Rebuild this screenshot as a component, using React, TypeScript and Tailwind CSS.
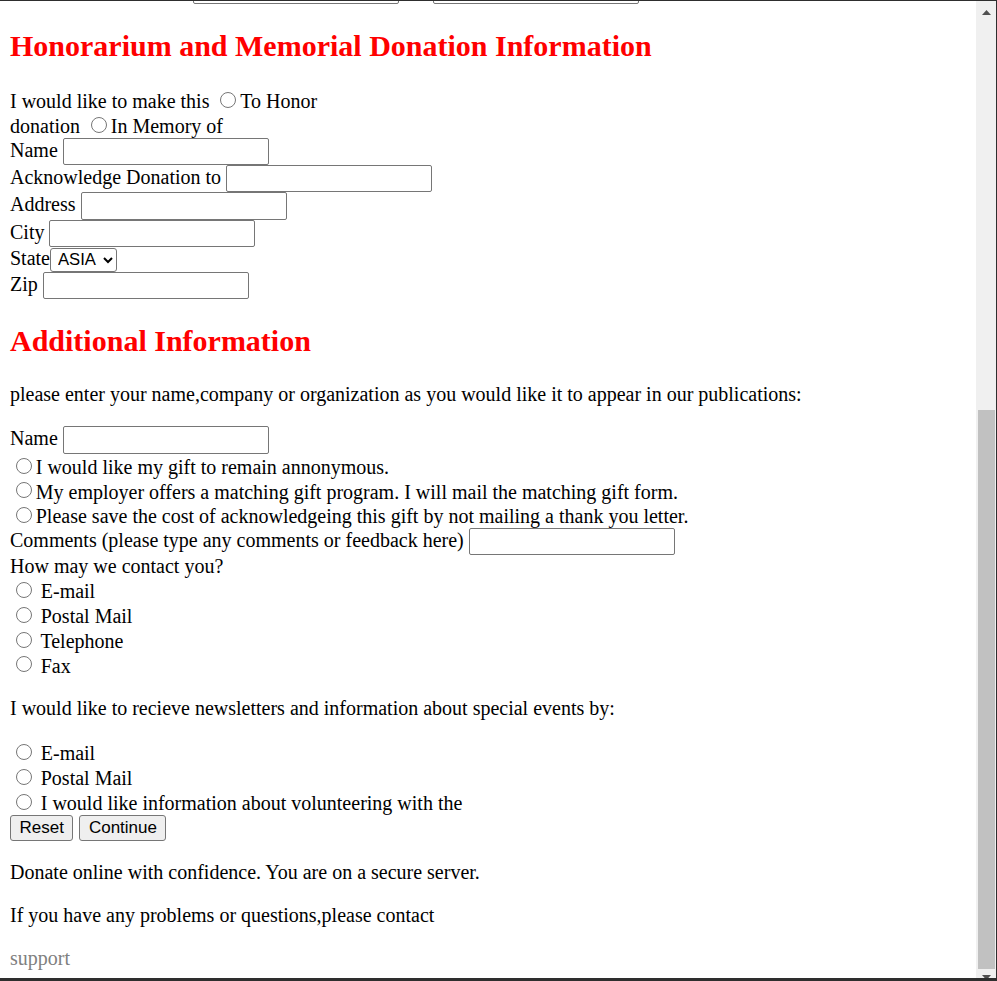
import React from "react";

const inputCls =
  "inline-block w-[206px] h-[27.4px] border border-[#767676] rounded-[2px] bg-white px-[2.5px] font-['Liberation_Sans',Arial,sans-serif] text-[16.67px] leading-[normal] align-baseline";

function Radio({ name }: { name: string }) {
  return (
    <input
      type="radio"
      name={name}
      className="inline-block w-[16px] h-[16px] mt-[3.75px] mr-[3.75px] ml-[6px] align-baseline"
    />
  );
}

function TextInput() {
  return <input type="text" className={inputCls} />;
}

function Btn({ children, cls = "" }: { children: React.ReactNode; cls?: string }) {
  return (
    <button
      type="button"
      className={
        "inline-block h-[26.5px] px-[8.5px] bg-[#efefef] border border-[#767676] rounded-[3px] font-['Liberation_Sans',Arial,sans-serif] text-[17px] leading-[normal] align-baseline text-black " +
        cls
      }
    >
      {children}
    </button>
  );
}

export default function App() {
  return (
    <div className="w-[997px] h-[981px] flex border-t border-r border-b-[3px] border-[#2e2e2e] bg-white">
      <div className="flex-1 h-[977px] overflow-hidden pl-[10px] font-['Liberation_Serif','Times_New_Roman',serif] text-[20px] leading-[23px] text-black">
        <div className="h-[3px] overflow-hidden flex items-end">
          <input type="text" className={inputCls + " shrink-0 ml-[183px]"} />
          <input type="text" className={inputCls + " shrink-0 ml-[34px]"} />
        </div>

        <h2 className="mt-[24.5px] mb-[25px] text-[30px] leading-[34.5px] font-bold text-[#ff0000]">
          Honorarium and Memorial Donation Information
        </h2>

        <div>
          I would like to make this <Radio name="honor" />
          To Honor
          <br />
          donation <Radio name="honor" />
          In Memory of
        </div>
        <div>
          Name <TextInput />
        </div>
        <div>
          Acknowledge Donation to <TextInput />
        </div>
        <div>
          Address <TextInput />
        </div>
        <div>
          City <TextInput />
        </div>
        <div>
          State
          <select
            defaultValue="ASIA"
            className="inline-block w-[67px] h-[24px] border border-[#767676] rounded-[3px] bg-white pl-[3px] font-['Liberation_Sans',Arial,sans-serif] text-[16.67px] leading-[normal] align-baseline text-black"
          >
            <option value="ASIA">ASIA</option>
          </select>
        </div>
        <div>
          Zip <TextInput />
        </div>

        <h2 className="mt-[25px] mb-[25px] text-[30px] leading-[34.5px] font-bold text-[#ff0000]">
          Additional Information
        </h2>

        <p className="mb-[20px]">
          please enter your name,company or organization as you would like it to appear in our publications:
        </p>
        <div>
          Name <TextInput />
        </div>
        <div>
          <Radio name="anon" />I would like my gift to remain annonymous.
        </div>
        <div>
          <Radio name="match" />My employer offers a matching gift program. I will mail the matching gift form.
        </div>
        <div>
          <Radio name="save" />Please save the cost of acknowledgeing this gift by not mailing a thank you letter.
        </div>
        <div>
          Comments (please type any comments or feedback here) <TextInput />
        </div>
        <div>How may we contact you?</div>
        <div>
          <Radio name="contact" /> E-mail
        </div>
        <div>
          <Radio name="contact" /> Postal Mail
        </div>
        <div>
          <Radio name="contact" /> Telephone
        </div>
        <div>
          <Radio name="contact" /> Fax
        </div>

        <p className="my-[20px]">
          I would like to recieve newsletters and information about special events by:
        </p>
        <div>
          <Radio name="news" /> E-mail
        </div>
        <div>
          <Radio name="news" /> Postal Mail
        </div>
        <div>
          <Radio name="news" /> I would like information about volunteering with the
        </div>
        <div>
          <Btn>Reset</Btn> <Btn cls="ml-[1px]">Continue</Btn>
        </div>

        <p className="mt-[20px]">Donate online with confidence. You are on a secure server.</p>
        <p className="mt-[20px]">If you have any problems or questions,please contact</p>
        <p className="mt-[20px] text-[#808080]">support</p>
      </div>

      <div className="w-[20px] h-[977px] shrink-0 bg-[#f0f0f0] flex flex-col">
        <div className="h-[20px] shrink-0 flex justify-center pt-[9px]">
          <svg width="9" height="5" viewBox="0 0 9 5">
            <path d="M0 5 L4.5 0 L9 5 Z" fill="#505050" />
          </svg>
        </div>
        <div className="h-[389px] shrink-0" />
        <div className="h-[559px] shrink-0 ml-[2px] mr-[1px] bg-[#c1c1c1]" />
        <div className="flex-1 flex justify-center pt-[6px] overflow-hidden">
          <svg width="9" height="5" viewBox="0 0 9 5">
            <path d="M0 0 L4.5 5 L9 0 Z" fill="#505050" />
          </svg>
        </div>
      </div>
    </div>
  );
}
